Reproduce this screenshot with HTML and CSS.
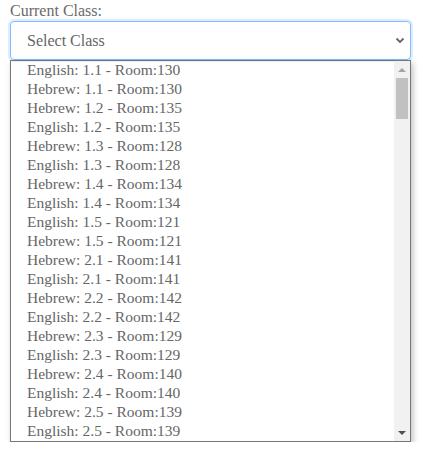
FILE: index.html
```html
<!DOCTYPE html>
<html>
<head>
<meta charset="utf-8">
<link rel="stylesheet" href="styles.css">
</head>
<body>
<div class="field">
  <label class="label">Current Class:</label>
  <div class="select">
    <span class="select-text">Select Class</span>
    <svg class="chev" width="10" height="7" viewBox="0 0 10 7"><path d="M1.5 1.5 L5 5 L8.5 1.5" fill="none" stroke="#666" stroke-width="1.8"/></svg>
  </div>
  <div class="dropdown">
    <ul class="options">
      <li>English: 1.1 - Room:130</li>
      <li>Hebrew: 1.1 - Room:130</li>
      <li>Hebrew: 1.2 - Room:135</li>
      <li>English: 1.2 - Room:135</li>
      <li>Hebrew: 1.3 - Room:128</li>
      <li>English: 1.3 - Room:128</li>
      <li>Hebrew: 1.4 - Room:134</li>
      <li>English: 1.4 - Room:134</li>
      <li>English: 1.5 - Room:121</li>
      <li>Hebrew: 1.5 - Room:121</li>
      <li>Hebrew: 2.1 - Room:141</li>
      <li>English: 2.1 - Room:141</li>
      <li>Hebrew: 2.2 - Room:142</li>
      <li>English: 2.2 - Room:142</li>
      <li>Hebrew: 2.3 - Room:129</li>
      <li>English: 2.3 - Room:129</li>
      <li>Hebrew: 2.4 - Room:140</li>
      <li>English: 2.4 - Room:140</li>
      <li>Hebrew: 2.5 - Room:139</li>
      <li>English: 2.5 - Room:139</li>
    </ul>
    <div class="scrollbar">
      <div class="arrow up"></div>
      <div class="track"><div class="thumb"></div></div>
      <div class="arrow down"></div>
    </div>
  </div>
</div>
</body>
</html>
```

FILE: styles.css
```css
html, body {
  margin: 0;
  padding: 0;
  background: #fff;
}
body {
  font-family: "Liberation Serif", serif;
  color: #666;
}
.field {
  padding: 2px 12px 0 10px;
  width: 401px;
}
.label {
  display: block;
  font-size: 16px;
  line-height: 18px;
  color: #6a6a6a;
  height: 19px;
}
.select {
  box-sizing: border-box;
  height: 39px;
  border: 1px solid #80bdff;
  border-radius: 4px;
  box-shadow: 0 0 0 2px rgba(128, 189, 255, 0.25);
  display: flex;
  align-items: center;
  justify-content: space-between;
  padding: 0 5px 0 16px;
}
.select-text {
  font-size: 16px;
  color: #666;
}
.dropdown {
  box-sizing: border-box;
  height: 382px;
  border: 1px solid #767676;
  display: flex;
  box-shadow: 2px 3px 6px rgba(0, 0, 0, 0.25);
}
.options {
  list-style: none;
  margin: 0;
  padding: 0 0 0 16px;
  flex: 1;
  overflow: hidden;
}
.options li {
  height: 19px;
  line-height: 18px;
  font-size: 15.5px;
  color: #666;
  white-space: nowrap;
}
.scrollbar {
  width: 16px;
  background: #f1f1f1;
  display: flex;
  flex-direction: column;
}
.arrow {
  height: 17px;
  display: flex;
  align-items: center;
  justify-content: center;
}
.arrow::before {
  content: "";
  width: 0;
  height: 0;
  border-left: 4px solid transparent;
  border-right: 4px solid transparent;
}
.arrow.up::before {
  border-bottom: 4px solid #a3a3a3;
}
.arrow.down::before {
  border-top: 4px solid #505050;
}
.track {
  flex: 1;
  padding: 0 2px;
}
.thumb {
  height: 41px;
  background: #c1c1c1;
}
```
